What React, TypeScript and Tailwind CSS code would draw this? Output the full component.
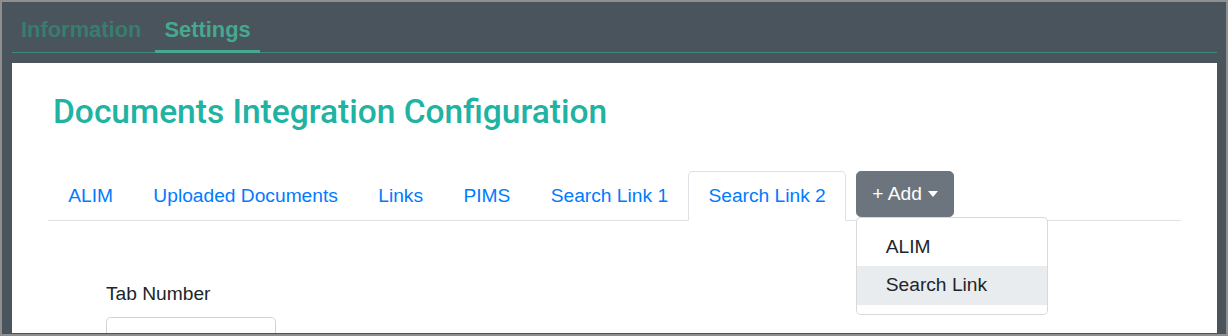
import React from "react";

const tabs = ["ALIM", "Uploaded Documents", "Links", "PIMS", "Search Link 1", "Search Link 2"];

export default function App() {
  return (
    <div className="w-[1228px] h-[336px] border-2 border-[#8f8f8f] bg-[#4a545c] flex flex-col overflow-hidden">
      <div className="ml-[10px] mr-[9px] h-[51px] flex items-stretch border-b border-[#3e8a7b] font-['Liberation_Sans',Arial,sans-serif] font-bold text-[21.9px] leading-[26px]">
        <div className="px-[9px] pt-[15px] text-[#387d6f]">Information</div>
        <div className="ml-[5px] px-[9px] pt-[15px] text-[#45a88f] border-b-[3px] border-[#45a88f] -mb-px">Settings</div>
      </div>
      <div className="mt-[10px] ml-[10px] mr-[9px] mb-px flex-1 bg-white px-[36px] overflow-hidden">
        <h3 className="mt-[29px] ml-[5px] font-['Roboto',sans-serif] font-medium text-[33.5px] leading-[1.2] text-[#20b2a2]">
          Documents Integration Configuration
        </h3>
        <div className="mt-[39px] flex items-start border-b border-[#dee2e6] font-['Liberation_Sans',Arial,sans-serif] text-[19.2px] leading-[28.8px]">
          {tabs.map((t) => {
            const active = t === "Search Link 2";
            return (
              <div
                key={t}
                className={
                  active
                    ? "px-[19.2px] py-[9.6px] border border-[#dee2e6] border-b-white bg-white rounded-t-[4.8px] -mb-px text-[#007bff]"
                    : "px-[19.2px] py-[9.6px] border border-transparent rounded-t-[4.8px] -mb-px text-[#007bff]"
                }
              >
                {t}
              </div>
            );
          })}
          <div className="relative ml-[10px]">
            <button className="flex items-center bg-[#6c757d] border border-[#6c757d] text-white rounded-[4.8px] px-[15.4px] py-[7.2px] leading-[29.6px]">
              + Add
              <span className="ml-[6px] w-0 h-0 border-t-[6px] border-t-white border-x-[5.5px] border-x-transparent" />
            </button>
            <div className="absolute left-0 top-full z-10 w-[192px] bg-white border border-black/15 rounded-[4.8px] py-[9.6px] text-[#212529]">
              <div className="px-[28.8px] py-[4.8px]">ALIM</div>
              <div className="px-[28.8px] py-[4.8px] bg-[#e9ecef]">Search Link</div>
            </div>
          </div>
        </div>
        <div className="ml-[58px] mt-[59px] font-['Liberation_Sans',Arial,sans-serif] text-[19.2px] leading-[28.8px] text-[#212529]">
          <div>Tab Number</div>
          <div className="mt-[8px] w-[170px] h-[45px] border border-[#ced4da] rounded-[4.8px]" />
        </div>
      </div>
    </div>
  );
}
